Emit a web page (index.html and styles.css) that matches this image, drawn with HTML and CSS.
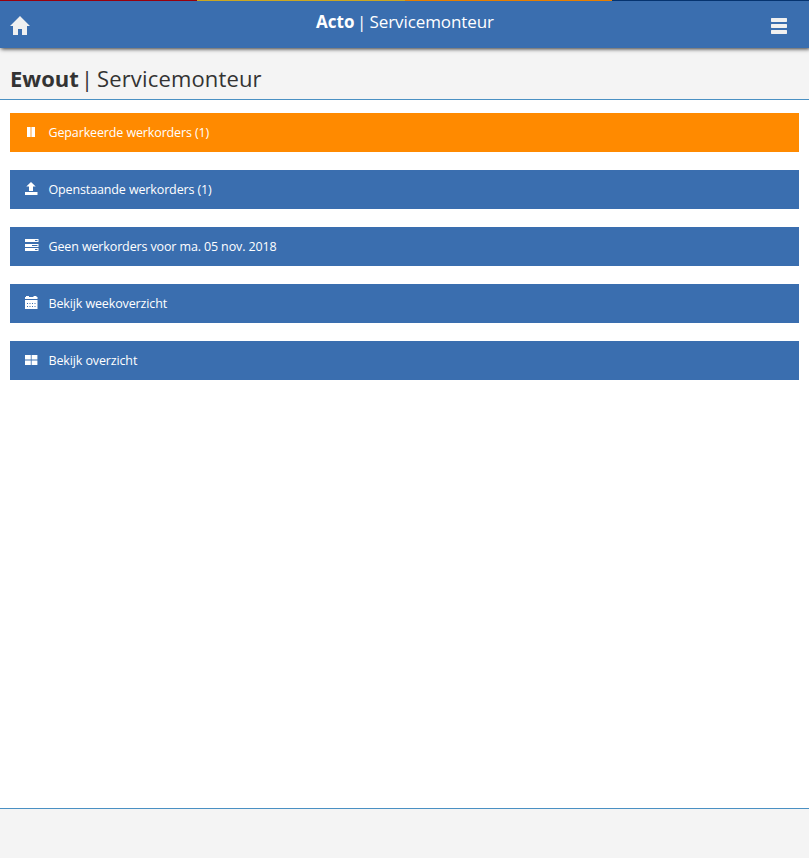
FILE: index.html
```html
<!DOCTYPE html>
<html lang="nl">
<head>
<meta charset="utf-8">
<title>Acto | Servicemonteur</title>
<link rel="stylesheet" href="styles.css">
</head>
<body>
<header class="topbar">
  <div class="stripes"><i class="red"></i><i class="gold"></i><i class="orange"></i><i class="navy"></i></div>
  <div class="bar">
    <svg class="home" width="20" height="19" viewBox="0 0 20 19"><path d="M10 0L20 10H17V19H12V13H8V19H3V10H0Z"/></svg>
    <div class="brand"><b>Acto</b><span class="sep">|</span><span class="role">Servicemonteur</span></div>
    <svg class="menu" width="16" height="16" viewBox="0 0 16 16"><path d="M.5 0H15.5L16 .5V3.5L15.5 4H.5L0 3.5V.5ZM.5 6H15.5L16 6.5V9.5L15.5 10H.5L0 9.5V6.5ZM.5 12H15.5L16 12.5V15.5L15.5 16H.5L0 15.5V12.5Z"/></svg>
  </div>
</header>
<h1 class="heading"><b>Ewout</b><span class="sep">|</span><span class="role">Servicemonteur</span></h1>
<main class="actions">
  <a class="action parked"><svg width="14" height="14" viewBox="0 0 14 14"><path d="M2 2H5.6V12H2ZM6.4 2H10V12H6.4Z"/></svg><span>Geparkeerde werkorders (1)</span></a>
  <a class="action"><svg width="14" height="14" viewBox="0 0 14 14"><path d="M6 0L10.7 4.5H8V9H4V4.5H1.3ZM0 10H12.5V13H0Z"/></svg><span>Openstaande werkorders (1)</span></a>
  <a class="action"><svg width="14" height="14" viewBox="0 0 14 14"><path fill-rule="evenodd" d="M0 0H13.5V3H0ZM10 1V2H12.5V1ZM0 5H13.5V8H0ZM7 6V7H12.5V6ZM0 9H13.5V12H0ZM10 10V11H12.5V10Z"/></svg><span>Geen werkorders voor ma. 05 nov. 2018</span></a>
  <a class="action"><svg width="14" height="14" viewBox="0 0 14 14"><path fill-rule="evenodd" d="M1 0H4V1H8.5V0H11.5V1H12.5V3H0V1H1ZM0 4H12.5V13H0ZM2 7V8H3V7ZM4.5 7V8H5.5V7ZM7 7V8H8V7ZM9.5 7V8H10.5V7ZM2 10V11H3V10ZM4.5 10V11H5.5V10ZM7 10V11H8V10ZM9.5 10V11H10.5V10Z"/></svg><span>Bekijk weekoverzicht</span></a>
  <a class="action"><svg width="14" height="14" viewBox="0 0 14 14"><path d="M0 2H5.8V6.6H0ZM6.6 2H12.4V6.6H6.6ZM0 7.4H5.8V12H0ZM6.6 7.4H12.4V12H6.6Z"/></svg><span>Bekijk overzicht</span></a>
</main>
<footer class="footer"></footer>
</body>
</html>
```

FILE: styles.css
```css
* { box-sizing: border-box; }
body {
  margin: 0;
  height: 858px;
  display: flex;
  flex-direction: column;
  background: #fff;
  color: #333;
  font-family: "Open Sans", "Noto Sans", sans-serif;
}
svg { display: block; flex: none; }
.topbar {
  position: relative;
  height: 48px;
  flex: none;
  background: #3a6eaf;
  color: #fff;
  box-shadow: 1px 1px 4px #333;
}
.stripes { display: grid; grid-template-columns: 197px 208px 207px 1fr; height: 1px; }
.red { background: #98000c; }
.gold { background: #cba722; }
.orange { background: #e67e00; }
.navy { background: #05336f; }
.bar { height: 47px; display: flex; justify-content: space-between; padding: 0 22px 0 10px; }
.bar svg { fill: #f0f0f0; }
.home { margin-top: 15px; }
.menu { margin-top: 17px; }
.brand { display: flex; line-height: 24px; font-size: 17px; margin: 9px 0 0 9px; white-space: nowrap; }
.brand b { width: 41px; }
.brand .sep { width: 12.5px; }
.brand .role { letter-spacing: -0.1px; }
.heading {
  display: flex;
  flex: none;
  height: 52px;
  margin: 0;
  padding: 14px 10px 0;
  background: #f4f4f4;
  border-bottom: 1px solid #4a90c3;
  font-size: 22px;
  line-height: 32px;
  font-weight: 400;
  white-space: nowrap;
}
.heading b { width: 71px; }
.heading .sep { width: 16px; }
.heading .role { letter-spacing: 0.15px; }
.actions { flex: 1; display: flex; flex-direction: column; gap: 18px; padding: 13px 10px 0; }
.action {
  height: 39px;
  display: flex;
  align-items: center;
  gap: 9.5px;
  padding-left: 15px;
  background: #3a6eaf;
  color: #fff;
  font-size: 12.5px;
  letter-spacing: -0.13px;
  line-height: 18px;
  white-space: nowrap;
}
.action svg { fill: #fff; margin-top: -1px; }
.parked { background: #ff8a00; }
.footer { height: 50px; flex: none; background: #f4f4f4; border-top: 1px solid #4a90c3; }
```
